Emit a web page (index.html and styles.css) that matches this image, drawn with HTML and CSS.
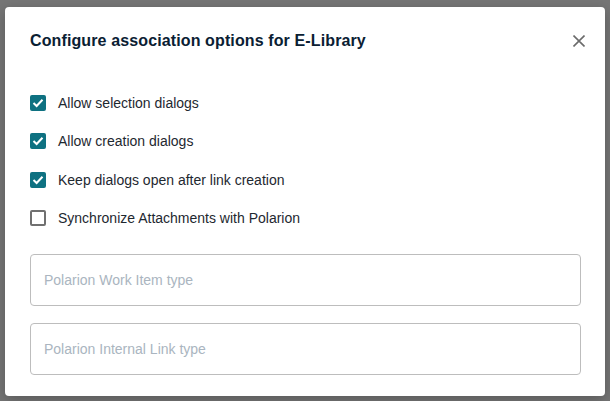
FILE: index.html
```html
<!DOCTYPE html>
<html lang="en">

<head>
  <meta charset="UTF-8" />
  <meta name="viewport" content="width=device-width, initial-scale=1.0" />
  <title>Configure association options</title>
  <link rel="stylesheet" href="styles.css">
</head>

<body>
  <section class="overlay">
    <div class="dialog">
      <div class="dialog-header">
        <h1 class="dialog-title">Configure association options for E-Library</h1>
        <button class="close-btn" aria-label="Close">
          <svg width="12" height="12" viewBox="0 0 12 12">
            <path d="M0.5 0.5 L11.5 11.5 M11.5 0.5 L0.5 11.5" stroke="#6b6b6b" stroke-width="1.6" fill="none" />
          </svg>
        </button>
      </div>

      <div class="options">
        <label class="option">
          <span class="check checked">
            <svg width="12" height="10" viewBox="0 0 12 10">
              <path d="M1.5 5 L4.6 8 L10.5 1.8" stroke="#ffffff" stroke-width="2" fill="none" />
            </svg>
          </span>
          Allow selection dialogs
        </label>
        <label class="option">
          <span class="check checked">
            <svg width="12" height="10" viewBox="0 0 12 10">
              <path d="M1.5 5 L4.6 8 L10.5 1.8" stroke="#ffffff" stroke-width="2" fill="none" />
            </svg>
          </span>
          Allow creation dialogs
        </label>
        <label class="option">
          <span class="check checked">
            <svg width="12" height="10" viewBox="0 0 12 10">
              <path d="M1.5 5 L4.6 8 L10.5 1.8" stroke="#ffffff" stroke-width="2" fill="none" />
            </svg>
          </span>
          Keep dialogs open after link creation
        </label>
        <label class="option">
          <span class="check"></span>
          Synchronize Attachments with Polarion
        </label>
      </div>

      <div class="fields">
        <input type="text" class="field" placeholder="Polarion Work Item type" />
        <input type="text" class="field" placeholder="Polarion Internal Link type" />
      </div>
    </div>
  </section>
</body>

</html>
```

FILE: styles.css
```css
:root {
  --backdrop: #767676;
  --title: #0a2033;
  --text: #1e2830;
  --teal: #0e7181;
  --border: #bdbdbd;
  --placeholder: #aab5c0;
}

* {
  box-sizing: border-box;
}

body {
  margin: 0;
  font-family: "Liberation Sans", Arial, sans-serif;
  background: var(--backdrop);
}

.overlay {
  padding: 7px 5px;
  height: 401px;
}

.dialog {
  width: 600px;
  height: 389px;
  background: #ffffff;
  border-radius: 4px;
  box-shadow: 0 4px 14px rgba(0, 0, 0, 0.25);
  padding: 24px 24px 0 25px;
}

.dialog-header {
  display: flex;
  justify-content: space-between;
  align-items: center;
  height: 20px;
}

.dialog-title {
  margin: 0;
  font-size: 16px;
  line-height: 20px;
  font-weight: bold;
  letter-spacing: 0.12px;
  color: var(--title);
}

.close-btn {
  border: none;
  background: none;
  padding: 0;
  margin-right: -4px;
  display: flex;
  cursor: pointer;
}

.options {
  display: flex;
  flex-direction: column;
  gap: 14.4px;
  margin-top: 40px;
}

.option {
  display: flex;
  align-items: center;
  gap: 12px;
  height: 24px;
  font-size: 14px;
  color: var(--text);
}

.check {
  width: 16px;
  height: 16px;
  border: 2px solid #707070;
  border-radius: 2px;
  display: flex;
  align-items: center;
  justify-content: center;
}

.check.checked {
  background: var(--teal);
  border-color: var(--teal);
}

.fields {
  display: flex;
  flex-direction: column;
  gap: 17px;
  margin-top: 24px;
}

.field {
  display: block;
  width: 100%;
  height: 52px;
  padding: 0 13px;
  border: 1px solid var(--border);
  border-radius: 4px;
  font-family: inherit;
  font-size: 14px;
  color: var(--text);
  outline: none;
}

.field::placeholder {
  color: var(--placeholder);
}
```
